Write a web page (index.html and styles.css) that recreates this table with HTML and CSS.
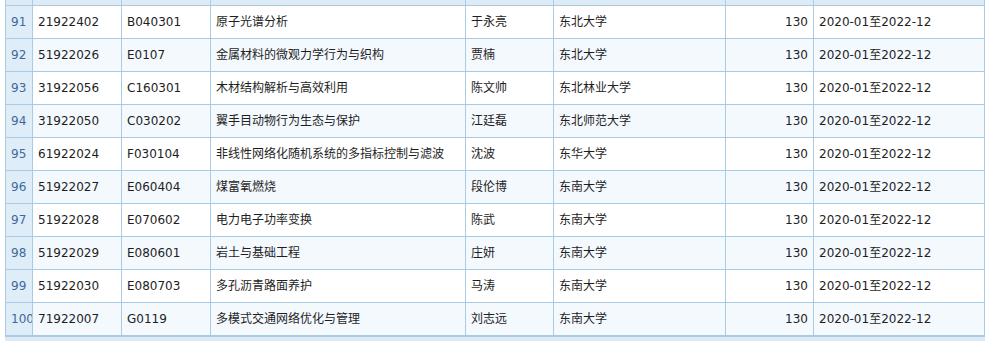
FILE: index.html
```html
<!DOCTYPE html>
<html lang="zh-CN">
<head>
<meta charset="utf-8">
<title>项目列表</title>
<link rel="stylesheet" href="styles.css">
</head>
<body>
<div class="grid-wrap">
<table class="grid">
<thead>
<tr class="head">
<td class="c-idx"></td><td class="c-no"></td><td class="c-code"></td><td class="c-title"></td><td class="c-leader"></td><td class="c-org"></td><td class="c-money"></td><td class="c-date"></td>
</tr>
</thead>
<tbody>
<tr><td class="idx">91</td><td>21922402</td><td>B040301</td><td>原子光谱分析</td><td>于永亮</td><td>东北大学</td><td class="num">130</td><td>2020-01至2022-12</td></tr>
<tr class="alt"><td class="idx">92</td><td>51922026</td><td>E0107</td><td>金属材料的微观力学行为与织构</td><td>贾楠</td><td>东北大学</td><td class="num">130</td><td>2020-01至2022-12</td></tr>
<tr><td class="idx">93</td><td>31922056</td><td>C160301</td><td>木材结构解析与高效利用</td><td>陈文帅</td><td>东北林业大学</td><td class="num">130</td><td>2020-01至2022-12</td></tr>
<tr class="alt"><td class="idx">94</td><td>31922050</td><td>C030202</td><td>翼手目动物行为生态与保护</td><td>江廷磊</td><td>东北师范大学</td><td class="num">130</td><td>2020-01至2022-12</td></tr>
<tr><td class="idx">95</td><td>61922024</td><td>F030104</td><td>非线性网络化随机系统的多指标控制与滤波</td><td>沈波</td><td>东华大学</td><td class="num">130</td><td>2020-01至2022-12</td></tr>
<tr class="alt"><td class="idx">96</td><td>51922027</td><td>E060404</td><td>煤富氧燃烧</td><td>段伦博</td><td>东南大学</td><td class="num">130</td><td>2020-01至2022-12</td></tr>
<tr><td class="idx">97</td><td>51922028</td><td>E070602</td><td>电力电子功率变换</td><td>陈武</td><td>东南大学</td><td class="num">130</td><td>2020-01至2022-12</td></tr>
<tr class="alt"><td class="idx">98</td><td>51922029</td><td>E080601</td><td>岩土与基础工程</td><td>庄妍</td><td>东南大学</td><td class="num">130</td><td>2020-01至2022-12</td></tr>
<tr><td class="idx">99</td><td>51922030</td><td>E080703</td><td>多孔沥青路面养护</td><td>马涛</td><td>东南大学</td><td class="num">130</td><td>2020-01至2022-12</td></tr>
<tr class="alt"><td class="idx">100</td><td>71922007</td><td>G0119</td><td>多模式交通网络优化与管理</td><td>刘志远</td><td>东南大学</td><td class="num">130</td><td>2020-01至2022-12</td></tr>
</tbody>
</table>
<div class="grid-foot"></div>
</div>
</body>
</html>
```

FILE: styles.css
```css
html, body {
  margin: 0;
  padding: 0;
  background: #ffffff;
}

body {
  font-family: "DejaVu Sans", "Noto Sans CJK SC", sans-serif;
  font-size: 12px;
  color: #1e1e1e;
}

.grid-wrap {
  width: 980px;
  margin-left: 5px;
}

.grid {
  width: 980px;
  table-layout: fixed;
  border-collapse: separate;
  border-spacing: 0;
}

.grid td {
  box-sizing: border-box;
  height: 33px;
  padding: 0 5px;
  border-right: 1px solid #a9cbe3;
  border-bottom: 1px solid #a9cbe3;
  white-space: nowrap;
  overflow: hidden;
  vertical-align: middle;
  line-height: 16px;
}

.grid td:first-child {
  border-left: 1px solid #a9cbe3;
}

.grid .head td {
  height: 6px;
  padding: 0;
  background: #dcebf6;
}

.c-idx { width: 28px; }
.c-no { width: 89px; }
.c-code { width: 89px; }
.c-title { width: 255px; }
.c-leader { width: 88px; }
.c-org { width: 172px; }
.c-money { width: 88px; }
.c-date { width: 171px; }

.grid tbody tr {
  background: #ffffff;
}

.grid tbody tr.alt {
  background: #f4f9fe;
}

.grid td.idx {
  background: #dfedf8;
  color: #3c6a9c;
  padding: 0 0 0 5px;
  text-overflow: clip;
}

.grid td.num {
  text-align: right;
}

.grid-foot {
  height: 5px;
  border-top: 1px solid #a9cbe3;
  background: #dcebf6;
}
```
